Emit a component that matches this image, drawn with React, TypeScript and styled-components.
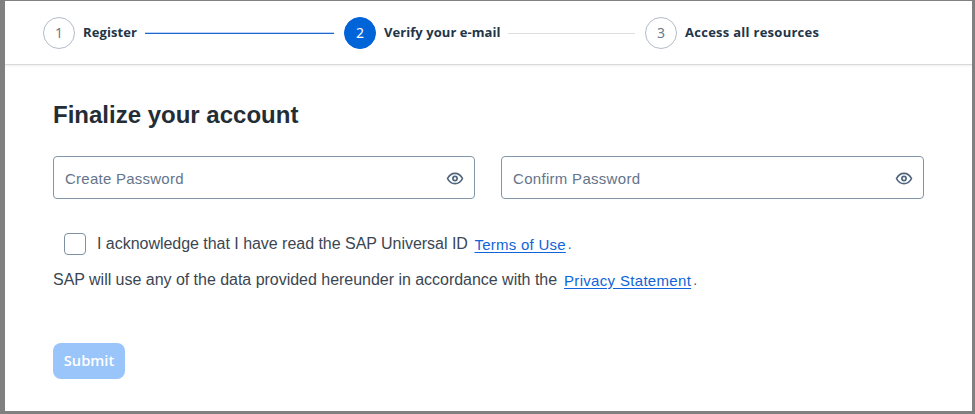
import React from "react";
import styled, { createGlobalStyle } from "styled-components";

const GlobalStyle = createGlobalStyle`
  *, *::before, *::after { box-sizing: border-box; }
  body { margin: 0; background: #808080; font-family: "Liberation Sans", Arial, sans-serif; }
`;

const Frame = styled.div`
  height: 414px;
  padding: 1px 3px 3px 5px;
  background: #808080;
`;

const Page = styled.div`
  height: 100%;
  background: #fff;
  overflow: hidden;
`;

const Steps = styled.ol`
  display: flex;
  align-items: center;
  height: 64px;
  margin: 0;
  padding: 0 0 0 38px;
  list-style: none;
  border-bottom: 1px solid #d9d9d9;
  box-shadow: 0 1px 2px rgba(0, 0, 0, 0.07);
`;

const Step = styled.li`
  display: flex;
  align-items: center;
`;

const StepNumber = styled.span<{ $active?: boolean }>`
  display: flex;
  align-items: center;
  justify-content: center;
  width: 32px;
  height: 32px;
  margin-right: 8px;
  border: 1px solid ${(p) => (p.$active ? "#0064d9" : "#b3bcc8")};
  border-radius: 50%;
  background: ${(p) => (p.$active ? "#0064d9" : "#fff")};
  color: ${(p) => (p.$active ? "#fff" : "#6c7a89")};
  font: 14px/20px "Noto Sans", sans-serif;
`;

const StepLabel = styled.span<{ $width: number; $spacing: number }>`
  width: ${(p) => p.$width}px;
  margin-top: -1px;
  color: #223548;
  font: 700 13px/20px "Open Sans", "Noto Sans", sans-serif;
  letter-spacing: ${(p) => p.$spacing}px;
  white-space: nowrap;
`;

const Connector = styled.span<{ $length: number; $done?: boolean }>`
  width: ${(p) => p.$length}px;
  height: 2px;
  margin-right: 10px;
  border-top: 1px solid ${(p) => (p.$done ? "#bcd3f5" : "#fff")};
  background: ${(p) => (p.$done ? "#1b68d2" : "#dedfe1")};
`;

const Form = styled.form`
  padding: 35px 48px 0;
`;

const Title = styled.h1`
  margin: 0;
  color: #242d35;
  font-size: 24px;
  line-height: 30px;
`;

const Fields = styled.div`
  display: grid;
  grid-template-columns: 422px 423px;
  gap: 26px;
  margin-top: 26px;
`;

const Field = styled.label`
  display: flex;
  align-items: center;
  height: 43px;
  padding: 0 10px 0 11px;
  border: 1px solid #8396a8;
  border-radius: 4px;
  color: #556b82;
`;

const PasswordInput = styled.input<{ $spacing: number }>`
  flex: 1;
  min-width: 0;
  margin-top: 2px;
  padding: 0;
  border: 0;
  outline: 0;
  background: transparent;
  font: 15px/20px "Liberation Sans", Arial, sans-serif;
  letter-spacing: ${(p) => p.$spacing}px;
  &::placeholder { color: #64748a; opacity: 1; }
`;

const Consent = styled.div`
  display: flex;
  align-items: center;
  height: 22px;
  margin: 34px 0 0 11px;
`;

const Checkbox = styled.input`
  appearance: none;
  width: 22px;
  height: 22px;
  margin: 0 11px 0 0;
  border: 1px solid #7d90a5;
  border-radius: 4px;
  background: #fff;
`;

const Text = styled.span<{ $width: number; $spacing: number }>`
  width: ${(p) => p.$width}px;
  color: #3b4652;
  font-size: 16px;
  line-height: 20px;
  letter-spacing: ${(p) => p.$spacing}px;
  white-space: nowrap;
`;

const Link = styled.a<{ $spacing: number }>`
  height: 18px;
  margin-top: 1px;
  color: #0f64d9;
  font-size: 15px;
  line-height: 18px;
  letter-spacing: ${(p) => p.$spacing}px;
  text-decoration: underline;
  text-underline-offset: 2px;
  white-space: nowrap;
`;

const Period = styled.span`
  margin-left: 2px;
  color: #4c5a69;
  font-size: 14px;
  line-height: 20px;
`;

const Privacy = styled.div`
  display: flex;
  align-items: center;
  height: 22px;
  margin-top: 14px;
`;

const Submit = styled.button`
  display: flex;
  align-items: center;
  justify-content: center;
  width: 72px;
  height: 36px;
  margin-top: 52px;
  padding: 0 0 2px;
  border: 0;
  border-radius: 8px;
  background: #99c5fb;
  color: #fff;
  font: 600 14.7px/20px "Open Sans", sans-serif;
`;

const EyeIcon = () => (
  <svg width="18" height="14" viewBox="0 0 18 14" fill="none" stroke="#4f667e">
    <path d="M1.5 7.500C3.200 4 5.800 2.300 9 2.300S14.800 4 16.500 7.500C14.800 11 12.200 12.700 9 12.700S3.200 11 1.500 7.500Z" strokeWidth="1.7" strokeLinejoin="round" />
    <circle cx="9" cy="7.500" r="2.100" strokeWidth="1.700" />
  </svg>
);

export default function App() {
  return (
    <>
      <GlobalStyle />
      <Frame>
        <Page>
          <Steps>
            <Step>
              <StepNumber>1</StepNumber>
              <StepLabel $width={62} $spacing={0.1}>Register</StepLabel>
              <Connector $length={189} $done />
            </Step>
            <Step>
              <StepNumber $active>2</StepNumber>
              <StepLabel $width={124} $spacing={0.06}>Verify your e-mail</StepLabel>
              <Connector $length={127} />
            </Step>
            <Step>
              <StepNumber>3</StepNumber>
              <StepLabel $width={136} $spacing={0.27}>Access all resources</StepLabel>
            </Step>
          </Steps>
          <Form onSubmit={(e) => e.preventDefault()}>
            <Title>Finalize your account</Title>
            <Fields>
              <Field>
                <PasswordInput type="password" placeholder="Create Password" $spacing={0.25} />
                <EyeIcon />
              </Field>
              <Field>
                <PasswordInput type="password" placeholder="Confirm Password" $spacing={0.3} />
                <EyeIcon />
              </Field>
            </Fields>
            <Consent>
              <Checkbox type="checkbox" aria-label="Acknowledge terms" />
              <Text $width={377.5} $spacing={-0.03}>I acknowledge that I have read the SAP Universal ID</Text>
              <Link $spacing={0.25}>Terms of Use</Link>
              <Period>.</Period>
            </Consent>
            <Privacy>
              <Text $width={511} $spacing={-0.025}>SAP will use any of the data provided hereunder in accordance with the</Text>
              <Link $spacing={0.32}>Privacy Statement</Link>
              <Period>.</Period>
            </Privacy>
            <Submit type="submit" disabled>Submit</Submit>
          </Form>
        </Page>
      </Frame>
    </>
  );
}
